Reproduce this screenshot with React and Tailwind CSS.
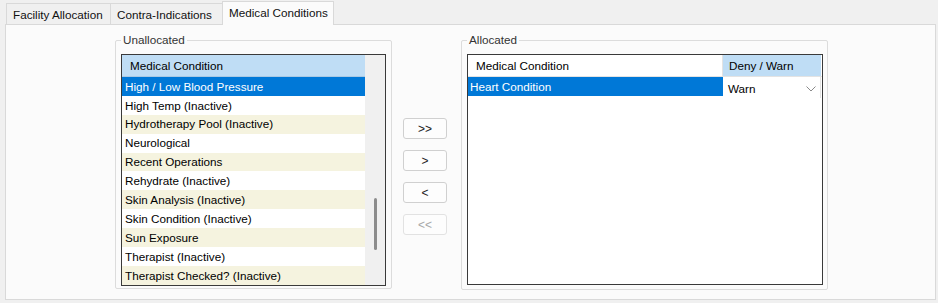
const unallocated = [
  'High / Low Blood Pressure',
  'High Temp (Inactive)',
  'Hydrotherapy Pool (Inactive)',
  'Neurological',
  'Recent Operations',
  'Rehydrate (Inactive)',
  'Skin Analysis (Inactive)',
  'Skin Condition (Inactive)',
  'Sun Exposure',
  'Therapist (Inactive)',
  'Therapist Checked? (Inactive)',
];

const tabs = [
  { label: 'Facility Allocation', width: 'w-[105px]' },
  { label: 'Contra-Indications', width: 'w-[113px]' },
];

function GroupBox({ title, className, children }) {
  return (
    <div className={`relative shrink-0 pt-[7px] ${className}`}>
      <div className="h-full border border-[#dcdcdc] rounded-[2px]">{children}</div>
      {/* caption sits over the top border */}
      <span className="absolute left-[6px] top-0 px-[2px] leading-[14px] bg-[#fbfbfb] text-[#333] whitespace-nowrap">{title}</span>
    </div>
  );
}

function MoveButton({ label, disabled }) {
  return (
    <button
      className={`w-[44px] h-[21px] border rounded-[3px] bg-[#fdfdfd] text-[12px] leading-none ${
        disabled ? 'border-[#e2e2e2] text-[#a8a8a8]' : 'border-[#d0d0d0] text-[#222]'
      }`}
    >
      {label}
    </button>
  );
}

export default function App() {
  return (
    <div className="w-[938px] h-[303px] bg-[#f0f0f0] overflow-hidden text-[11.7px] text-black font-['Liberation_Sans',Arial,sans-serif]">
      {/* Tabs */}
      <div className="flex items-end h-[24px] pl-[6px]">
        {tabs.map((t) => (
          <div
            key={t.label}
            className={`${t.width} shrink-0 h-[21px] -mr-px flex items-center px-[6px] pt-[1px] border border-b-0 border-[#d9d9d9] bg-[#f0f0f0] text-[#111] whitespace-nowrap`}
          >
            {t.label}
          </div>
        ))}
        <div className="relative z-10 shrink-0 w-[112px] h-[24px] -mb-px flex items-center px-[6px] pb-[2px] border border-b-0 border-[#d9d9d9] bg-[#fbfbfb] text-[#111] whitespace-nowrap">
          Medical Conditions
        </div>
      </div>

      {/* Tab page */}
      <div className="ml-[5px] w-[931px] h-[276px] border border-[#d9d9d9] bg-[#fbfbfb] flex items-start pt-[8px] pl-[109px]">
        <GroupBox title="Unallocated" className="w-[277px] h-[256px]">
          <div className="ml-[5px] mt-[13px] w-[265px] h-[232px] border border-[#3a3a3a] bg-white flex overflow-hidden">
            <div className="w-[243px] flex flex-col">
              <div className="h-[22px] shrink-0 flex items-center pl-[8px] bg-[#bfddf5] border-b border-[#a9c9e4]">
                Medical Condition
              </div>
              {unallocated.map((name, i) => (
                <div
                  key={name}
                  className={`h-[18.9px] shrink-0 flex items-center pl-[3px] whitespace-nowrap ${
                    i === 0 ? 'bg-[#0078d7] text-white' : i % 2 === 0 ? 'bg-[#f5f3df]' : 'bg-white'
                  }`}
                >
                  {name}
                </div>
              ))}
            </div>
            {/* scrollbar */}
            <div className="flex-1 bg-[#f0f0f0] flex justify-center pt-[143px]">
              <div className="w-[3px] h-[52px] rounded-full bg-[#8c8c8c]" />
            </div>
          </div>
        </GroupBox>

        <div className="ml-[11px] mt-[85px] flex flex-col gap-[11px]">
          <MoveButton label=">>" />
          <MoveButton label=">" />
          <MoveButton label="<" />
          <MoveButton label="<<" disabled />
        </div>

        <GroupBox title="Allocated" className="ml-[14px] w-[367px] h-[257px]">
          <div className="ml-[5px] mt-[13px] w-[356px] h-[231px] border border-[#3a3a3a] bg-white flex flex-col overflow-hidden">
            <div className="h-[22px] shrink-0 flex border-b border-[#e3e3e3]">
              <div className="w-[255px] flex items-center pl-[8px] border-r border-[#e3e3e3]">Medical Condition</div>
              <div className="w-[98px] flex items-center pl-[6px] bg-[#bfddf5]">Deny / Warn</div>
            </div>
            <div className="h-[21px] shrink-0 flex">
              <div className="w-[255px] h-[19px] flex items-center pl-[2px] bg-[#0078d7] text-white">Heart Condition</div>
              <div className="w-[97px] ml-[1px] flex items-center justify-between pl-[4px] pr-[4px] pt-[2px] border-r border-[#e3e3e3]">
                <span>Warn</span>
                <svg width="10" height="6" viewBox="0 0 10 6" fill="none" stroke="#8a8a8a" strokeWidth="1">
                  <path d="M0.5 0.5 L5 5 L9.5 0.5" />
                </svg>
              </div>
            </div>
          </div>
        </GroupBox>
      </div>
    </div>
  );
}
